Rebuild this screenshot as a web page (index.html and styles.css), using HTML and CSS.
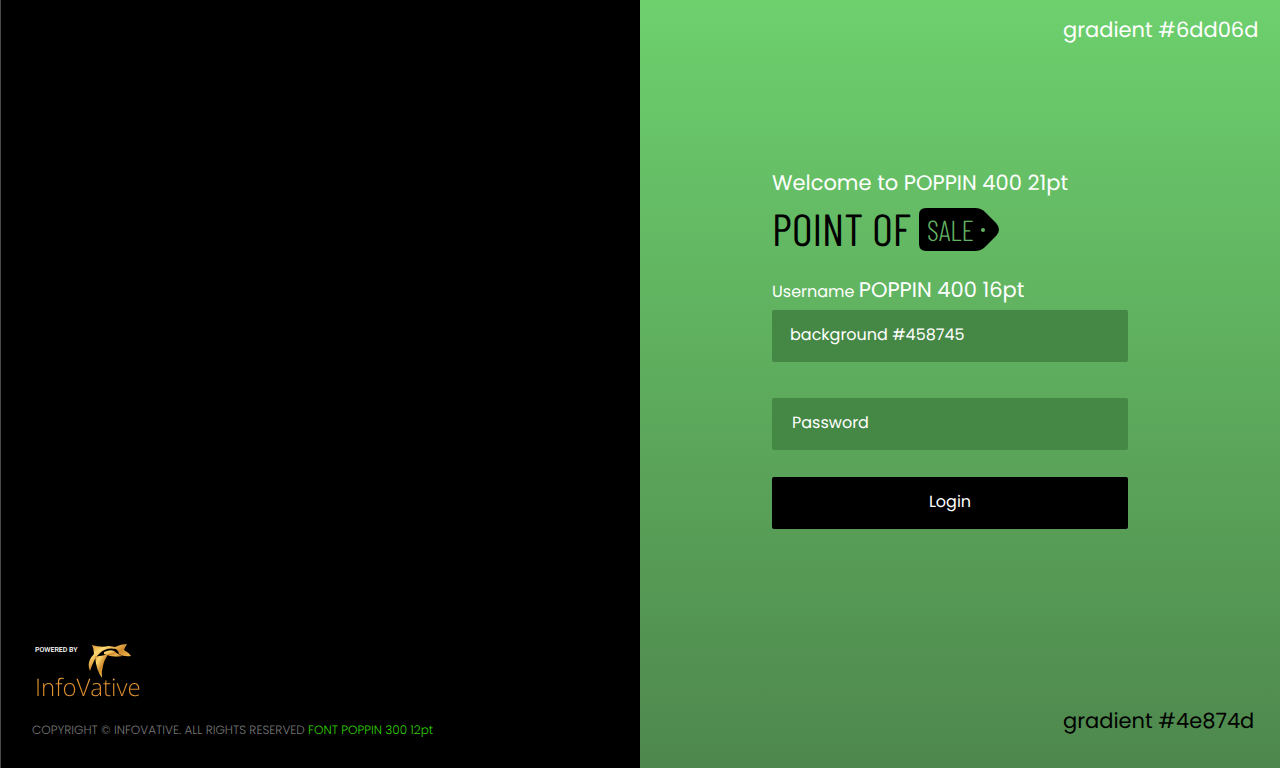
FILE: index.html
```html
<!DOCTYPE html>
<html lang="en">
<head>
<meta charset="utf-8">
<title>Point of Sale – Login</title>
<link rel="stylesheet" href="styles.css">
</head>
<body>
<div class="page">
  <aside class="brand">
    <div class="vendor">
      <div class="vendor-top">
        <span class="powered">POWERED BY</span>
        <svg class="bird" viewBox="0 0 44 36" aria-hidden="true">
          <defs>
            <linearGradient id="gold" x1="0" y1="0" x2="1" y2="1">
              <stop offset="0" stop-color="#c87a1c"/>
              <stop offset=".25" stop-color="#ffd870"/>
              <stop offset=".5" stop-color="#d08a2c"/>
              <stop offset=".7" stop-color="#f0b850"/>
              <stop offset="1" stop-color="#8a4a0c"/>
            </linearGradient>
          </defs>
          <path fill="url(#gold)" d="M4 1 Q13 4 21 2 L27 3 Q33 0 39 0 Q37 3 36 6 Q40 8 43 12 Q36 13 31 10 Q31 7 28 5 Q18 3 12 9 Q8 12 6 17 Q4 21 2 27 Q-2 18 6 10 Q6 5 4 1Z"/>
          <path fill="url(#gold)" d="M7 12 Q13 13 21 9 Q16 16 15 22 Q13 28 14 34 Q8 26 7 12Z"/>
          <path fill="url(#gold)" d="M16 8 Q22 5 26 7 Q29 10 35 12 Q25 14 16 10Z"/>
        </svg>
      </div>
      <div class="vendor-name">InfoVative</div>
    </div>
    <p class="copyright">COPYRIGHT © INFOVATIVE. ALL RIGHTS RESERVED <span class="lime">FONT POPPIN 300 12pt</span></p>
  </aside>
  <main class="panel">
    <p class="note">gradient #6dd06d</p>
    <form class="login">
      <p class="welcome">Welcome to POPPIN 400 21pt</p>
      <h1 class="logo">
        <span class="logo-text">POINT OF</span>
        <span class="tag">
          <svg class="tag-shape" viewBox="0 0 80 43" aria-hidden="true"><path d="M7 0H56Q62 0 66 4L77 15Q83 21.500 77 28L66 39Q62 43 56 43H7Q0 43 0 36V7Q0 0 7 0Z"/><circle cx="64" cy="22" r="2" fill="#62b462"/></svg>
          <span class="tag-text">SALE</span>
        </span>
      </h1>
      <label class="label" for="user">Username <span class="label-big">POPPIN 400 16pt</span></label>
      <input class="field" id="user" type="text" value="background #458745">
      <input class="field" id="pass" type="password" placeholder="Password" aria-label="Password">
      <button class="submit" type="submit">Login</button>
    </form>
    <p class="note note-dark">gradient #4e874d</p>
  </main>
</div>
</body>
</html>
```
FILE: styles.css
```css
* { box-sizing: border-box; }
body {
  margin: 0;
  font-family: Poppins, Inter, sans-serif;
  text-rendering: geometricPrecision;
  color: #fff;
}
p, h1 { margin: 0; font-weight: 400; }

.page {
  display: grid;
  grid-template-columns: 1fr 1fr;
  min-height: 100vh;
}

.brand {
  display: flex;
  flex-direction: column;
  justify-content: flex-end;
  gap: 19px;
  padding: 27px 31px;
  background: #000;
  border-left: 1px solid #4a4a4a;
}
.vendor { padding-left: 3px; }
.vendor-top { display: flex; gap: 8px; height: 30px; }
.powered {
  font: 500 7px/12px Roboto, sans-serif;
  width: 45px;
  white-space: nowrap;
}
.bird { width: 44px; height: 36px; }
.vendor-name {
  font: 300 24px/28px "Open Sans", sans-serif;
  width: max-content;
  color: transparent;
  background: linear-gradient(#ffb040, #d88828 60%, #f8a840);
  -webkit-background-clip: text;
  background-clip: text;
}
.copyright {
  font-size: 12px;
  line-height: 20px;
  font-weight: 300;
  color: #777;
}
.lime { color: #2fd000; }

.panel {
  display: flex;
  flex-direction: column;
  padding: 15px 24px 30px 132px;
  background: linear-gradient(#6dd06d, #4e874d);
}
.note {
  align-self: flex-end;
  width: 193px;
  font-size: 21px;
  line-height: 32px;
  white-space: nowrap;
}
.note-dark { margin-top: auto; color: #000; }

.login {
  display: flex;
  flex-direction: column;
  width: 100%;
  max-width: 356px;
  margin-top: 121px;
}
.welcome { font-size: 21px; line-height: 32px; white-space: nowrap; }
.logo {
  display: flex;
  align-items: center;
  gap: 8px;
  margin-top: 8px;
  color: #000;
  font-family: "Barlow Condensed", "Roboto Condensed", sans-serif;
}
.logo-text {
  padding-bottom: 2px;
  font-size: 45px;
  line-height: 41px;
  white-space: nowrap;
}
.tag { display: grid; align-items: center; }
.tag-shape, .tag-text { grid-area: 1 / 1; }
.tag-shape { width: 80px; height: 43px; }
.tag-text {
  padding-left: 8px;
  font-size: 29px;
  line-height: 43px;
  font-weight: 300;
  color: #62b462;
}
.label {
  margin-top: 24px;
  font-size: 16px;
  line-height: 32px;
  white-space: nowrap;
}
.label-big { font-size: 21px; }
.field, .submit {
  width: 100%;
  height: 52px;
  padding: 0 18px 3px;
  border: 0;
  border-radius: 2px;
  font: inherit;
  font-size: 16px;
  text-rendering: inherit;
  color: #fff;
}
.field { margin-top: 2px; background: #458745; }
.field + .field { margin-top: 36px; padding-left: 20px; }
.field::placeholder { color: #fff; opacity: 1; }
.submit { margin-top: 27px; background: #000; }
```
